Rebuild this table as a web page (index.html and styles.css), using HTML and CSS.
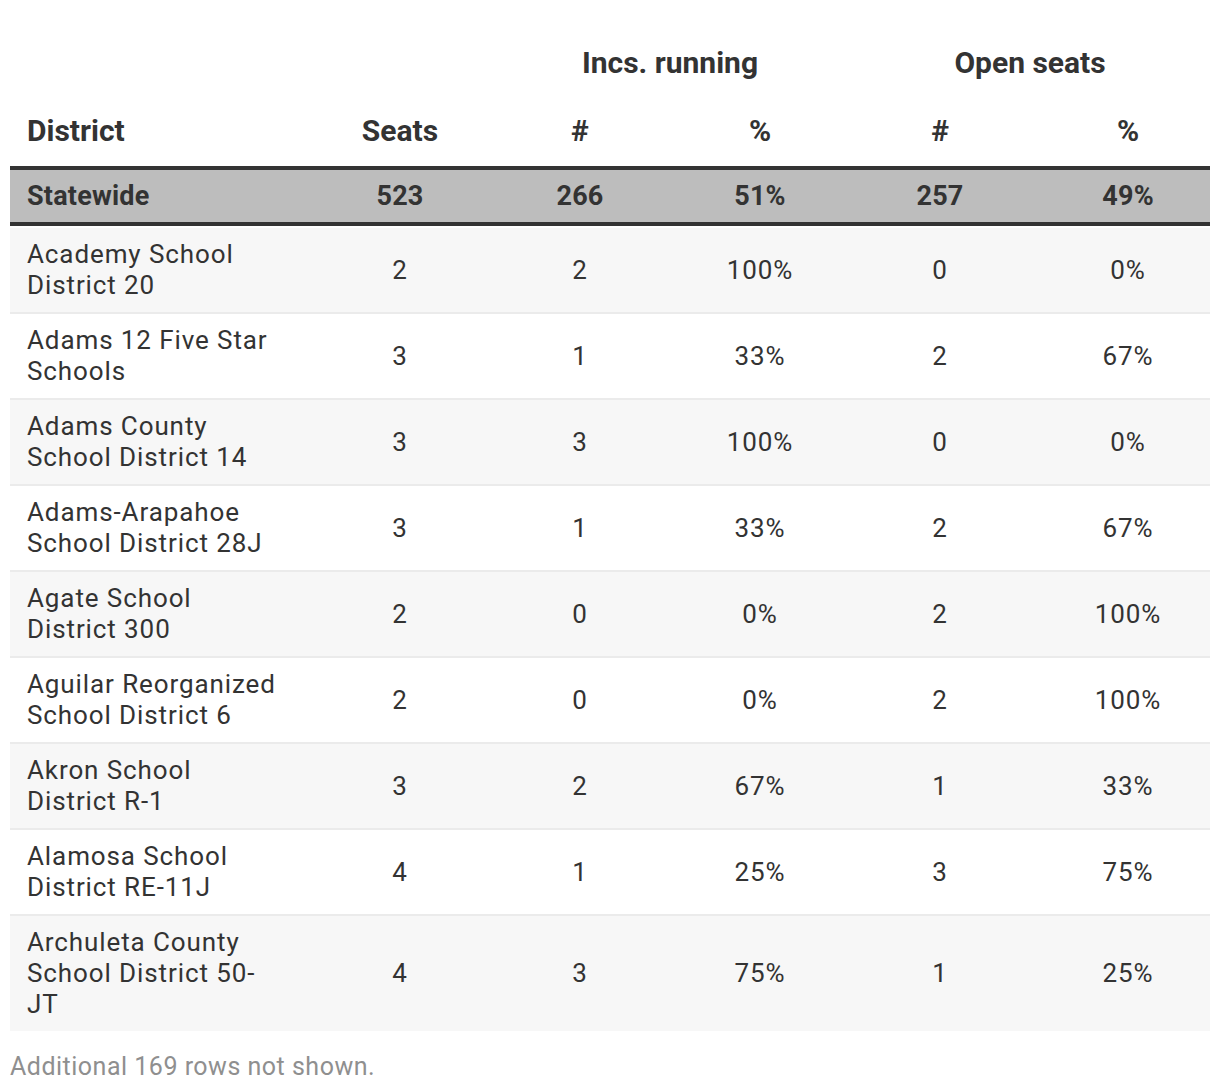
FILE: index.html
```html
<!DOCTYPE html>
<html>
<head>
<meta charset="utf-8">
<link rel="stylesheet" href="styles.css">
</head>
<body>
<div class="wrap">
<table class="tbl">
  <colgroup>
    <col class="c-dist"><col class="c-num"><col class="c-num"><col class="c-num"><col class="c-num"><col class="c-num">
  </colgroup>
  <thead>
    <tr class="grp">
      <th></th><th></th>
      <th colspan="2">Incs. running</th>
      <th colspan="2">Open seats</th>
    </tr>
    <tr class="cols">
      <th class="name">District</th>
      <th>Seats</th>
      <th>#</th>
      <th>%</th>
      <th>#</th>
      <th class="last">%</th>
    </tr>
  </thead>
  <tbody>
    <tr class="total">
      <td class="name">Statewide</td><td>523</td><td>266</td><td>51%</td><td>257</td><td class="last">49%</td>
    </tr>
    <tr class="odd first">
      <td class="name">Academy School District 20</td><td>2</td><td>2</td><td>100%</td><td>0</td><td class="last">0%</td>
    </tr>
    <tr>
      <td class="name">Adams 12 Five Star Schools</td><td>3</td><td>1</td><td>33%</td><td>2</td><td class="last">67%</td>
    </tr>
    <tr class="odd">
      <td class="name">Adams County School District 14</td><td>3</td><td>3</td><td>100%</td><td>0</td><td class="last">0%</td>
    </tr>
    <tr>
      <td class="name">Adams-Arapahoe School District 28J</td><td>3</td><td>1</td><td>33%</td><td>2</td><td class="last">67%</td>
    </tr>
    <tr class="odd">
      <td class="name">Agate School District 300</td><td>2</td><td>0</td><td>0%</td><td>2</td><td class="last">100%</td>
    </tr>
    <tr>
      <td class="name">Aguilar Reorganized School District 6</td><td>2</td><td>0</td><td>0%</td><td>2</td><td class="last">100%</td>
    </tr>
    <tr class="odd">
      <td class="name">Akron School District R-1</td><td>3</td><td>2</td><td>67%</td><td>1</td><td class="last">33%</td>
    </tr>
    <tr>
      <td class="name">Alamosa School District RE-11J</td><td>4</td><td>1</td><td>25%</td><td>3</td><td class="last">75%</td>
    </tr>
    <tr class="odd lastrow">
      <td class="name">Archuleta County School District 50-JT</td><td>4</td><td>3</td><td>75%</td><td>1</td><td class="last">25%</td>
    </tr>
  </tbody>
</table>
<p class="note">Additional 169 rows not shown.</p>
</div>
</body>
</html>
```

FILE: styles.css
```css
html, body {
  margin: 0;
  padding: 0;
  background: #fff;
}
.wrap {
  padding: 0 10px;
  font-family: Roboto, "Liberation Sans", sans-serif;
  color: #333;
}
.tbl {
  width: 1200px;
  border-collapse: separate;
  border-spacing: 0;
  table-layout: fixed;
}
.c-dist { width: 300px; }
.c-num { width: 180px; }
.tbl th {
  font-weight: 700;
  font-size: 30px;
  line-height: 34px;
  text-align: center;
  padding: 0;
}
.grp th {
  height: 100px;
  vertical-align: top;
  padding-top: 46px;
  box-sizing: border-box;
}
.cols th {
  height: 70px;
  vertical-align: top;
  padding-top: 14px;
  box-sizing: border-box;
  border-bottom: 4px solid #333;
}
.tbl th.name, .tbl td.name {
  text-align: left;
  padding-left: 17px;
  padding-right: 30px;
}
.tbl th.last, .tbl td.last {
  padding-left: 16px;
  padding-right: 0;
}
.tbl td {
  font-size: 26px;
  line-height: 31px;
  letter-spacing: 0.9px;
  text-align: center;
  padding-top: 11px;
  padding-bottom: 11px;
  border-bottom: 2px solid #ebebeb;
}
.total td {
  background: #bdbdbd;
  font-weight: 700;
  font-size: 27px;
  letter-spacing: 0.2px;
  height: 56px;
  box-sizing: border-box;
  padding-top: 1px;
  padding-bottom: 0;
  border-bottom: 4px solid #333;
}
.first td {
  border-top: 2px solid #fff;
}
.odd td {
  background: #f7f7f7;
}
.lastrow td {
  border-bottom: none;
}
.note {
  margin: 21px 0 0;
  font-size: 25px;
  line-height: 30px;
  letter-spacing: 0.5px;
  color: #8f8f8f;
}
```
